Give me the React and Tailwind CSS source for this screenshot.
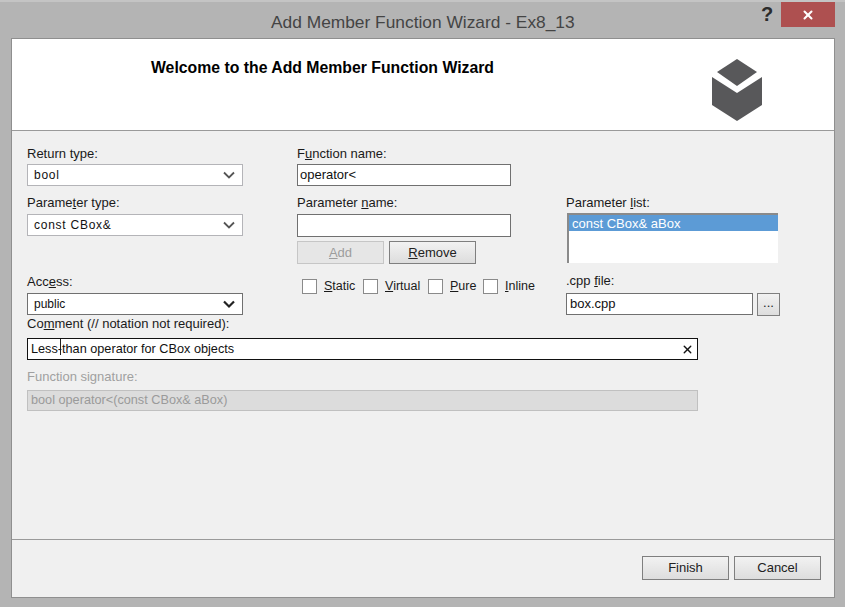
import { X } from "lucide-react";

const Chevron = ({ dark }) => (
  <svg width="14" height="9" viewBox="0 0 14 9" className={dark ? "text-[#222]" : "text-[#555]"}>
    <path d="M2 1.5 L7 6.5 L12 1.5" fill="none" stroke="currentColor" strokeWidth={dark ? 2.2 : 1.8} />
  </svg>
);

const Label = ({ children, className = "" }) => (
  <div className={`h-[14px] text-[13px] leading-[14px] whitespace-nowrap ${className || "text-[#1a1a1a]"}`}>{children}</div>
);

const Select = ({ value, dark }) => (
  <div className={`flex h-[22px] w-[216px] items-center justify-between border bg-white pr-[6px] pl-[6px] ${dark ? "border-[#707070]" : "border-[#b4b4b8]"}`}>
    <span className={`text-[12px] text-[#111] ${dark ? "tracking-normal" : "tracking-[0.75px]"}`}>{value}</span>
    <Chevron dark={dark} />
  </div>
);

const Check = ({ children, className = "" }) => (
  <div className={`flex items-center ${className}`}>
    <div className="h-[15px] w-[15px] border border-[#8a8a8a] bg-white" />
    <span className="ml-[7px] text-[12.5px] text-[#1a1a1a]">{children}</span>
  </div>
);

const Btn = ({ children, className = "" }) => (
  <div className={`flex items-center justify-center border border-[#7f7f7f] bg-gradient-to-b from-[#f2f2f2] to-[#dddddd] text-[13px] text-[#222] ${className}`}>
    {children}
  </div>
);

export default function App() {
  return (
    <div className="flex h-[607px] w-[845px] flex-col overflow-hidden bg-[#b4b4b4] font-['Liberation_Sans',sans-serif]">
      {/* title bar */}
      <div className="h-[2px] bg-[#c4c4c4]" />
      <div className="flex h-[36px] shrink-0">
        <div className="flex-1 pt-[9px] pl-[271px] text-[17.35px] leading-[22px] whitespace-nowrap text-[#444]">
          Add Member Function Wizard - Ex8_13
        </div>
        <div className="w-[20px] text-[20px] leading-[24px] font-bold text-[#2b2b2b]">?</div>
        <div className="mr-[10px] flex h-[25px] w-[54px] items-center justify-center bg-[#ae5050]">
          <X size={14} strokeWidth={3.5} className="text-white" />
        </div>
      </div>

      {/* client area */}
      <div className="mr-[10px] ml-[11px] flex h-[560px] shrink-0 flex-col border border-[#8f8f8f] bg-[#f0f0f0]">
        <div className="flex h-[92px] shrink-0 border-b border-[#9a9a9a] bg-white">
          <div className="w-[671px] pt-[19px] pl-[139px] text-[15.8px] leading-[20px] font-bold whitespace-nowrap text-black">
            Welcome to the Add Member Function Wizard
          </div>
          <svg width="52" height="64" viewBox="0 0 52 64" className="mt-[20px] ml-[29px] text-[#58585a]">
            <path d="M25 0 L45 13 L25 27 L5 13 Z" fill="currentColor" />
            <path d="M0 18 L25 34 L50 18 L50 46 L25 62 L0 46 Z" fill="currentColor" />
          </svg>
        </div>

        <div className="flex-1 pt-[16px] pl-[15px]">
          <div className="flex">
            <div className="w-[270px]">
              <Label>Return type:</Label>
              <div className="mt-[3px]"><Select value="bool" /></div>
              <Label className="mt-[10px] text-[#1a1a1a]">Parame<u>t</u>er type:</Label>
              <div className="mt-[4px]"><Select value="const CBox&" /></div>
              <Label className="mt-[39px] text-[#1a1a1a]">Acc<u>e</u>ss:</Label>
              <div className="mt-[4px]"><Select value="public" dark /></div>
            </div>

            <div className="w-[269px]">
              <Label>F<u>u</u>nction name:</Label>
              <div className="mt-[3px] flex h-[22px] w-[214px] items-center border border-[#707070] bg-white pl-[2px] text-[13px] text-[#111]">operator&lt;</div>
              <Label className="mt-[10px] text-[#1a1a1a]">Parameter <u>n</u>ame:</Label>
              <div className="mt-[4px] h-[23px] w-[214px] border border-[#707070] bg-white" />
              <div className="mt-[4px] flex gap-[5px]">
                <div className="flex h-[23px] w-[87px] items-center justify-center border border-[#c6c6c6] bg-[#e6e6e6] text-[13px] text-[#9d9d9d]"><u>A</u>dd</div>
                <Btn className="h-[23px] w-[87px]"><u>R</u>emove</Btn>
              </div>
              <div className="mt-[13px] flex pl-[5px]">
                <Check className="w-[61px]"><u>S</u>tatic</Check>
                <Check className="w-[65px]"><u>V</u>irtual</Check>
                <Check className="w-[55px]"><u>P</u>ure</Check>
                <Check><u>I</u>nline</Check>
              </div>
            </div>

            <div className="pt-[49px]">
              <Label className="text-[#1a1a1a]">Parameter <u>l</u>ist:</Label>
              <div className="mt-[3px] ml-[1px] h-[50px] w-[211px] border-t-2 border-l-2 border-[#8a8a8a] bg-white">
                <div className="h-[16px] bg-[#5c9bd6] pl-[3px] text-[13px] leading-[18px] text-white">const CBox&amp; aBox</div>
              </div>
              <Label className="mt-[11px] text-[#1a1a1a]">.cpp <u>f</u>ile:</Label>
              <div className="mt-[5px] flex">
                <div className="flex h-[22px] w-[187px] items-center border border-[#707070] bg-white pl-[3px] text-[13px] text-[#111]">box.cpp</div>
                <Btn className="ml-[4px] h-[23px] w-[23px] pb-[4px]">...</Btn>
              </div>
            </div>
          </div>

          <Label className="mt-[1px] text-[#1a1a1a]">Co<u>m</u>ment (// notation not required):</Label>
          <div className="mt-[7px] flex h-[22px] w-[671px] items-center justify-between border border-[#111] bg-white pr-[3px] pl-[3px] pt-[1px] text-[12.7px] text-[#111]">
            <span className="relative">
              Less-than operator for CBox objects
              <span className="absolute top-[-1px] left-[29px] h-[16px] w-[1px] bg-[#222]" />
            </span>
            <X size={13} strokeWidth={2.5} className="text-[#111]" />
          </div>
          <Label className="mt-[10px] text-[12.8px] text-[#a0a0a0]">Function signature:</Label>
          <div className="mt-[6px] flex h-[21px] w-[671px] items-center border border-[#c0c0c0] bg-[#dcdcdc] pl-[3px] text-[12.7px] text-[#9a9a9a]">
            bool operator&lt;(const CBox&amp; aBox)
          </div>
        </div>

        <div className="flex h-[58px] shrink-0 justify-end gap-[5px] border-t border-[#9a9a9a] pt-[16px] pr-[13px]">
          <Btn className="h-[24px] w-[87px]">Finish</Btn>
          <Btn className="h-[24px] w-[87px]">Cancel</Btn>
        </div>
      </div>
    </div>
  );
}
